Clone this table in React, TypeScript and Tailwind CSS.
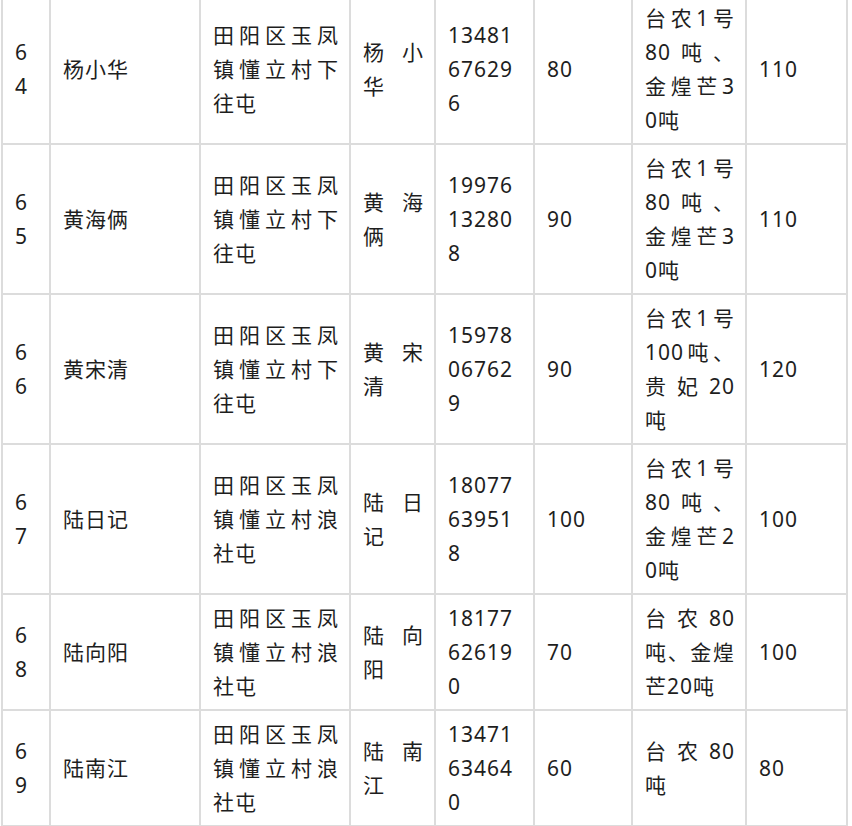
type Row = {
  no: string
  name: string
  addr: string
  contact: string
  phone: string
  area: string
  yield: string
  total: string
}

const rows: Row[] = [
  { no: '64', name: '杨小华', addr: '田阳区玉凤镇懂立村下往屯', contact: '杨小华', phone: '13481676296', area: '80', yield: '台农1号80吨、金煌芒30吨', total: '110' },
  { no: '65', name: '黄海俩', addr: '田阳区玉凤镇懂立村下往屯', contact: '黄海俩', phone: '19976132808', area: '90', yield: '台农1号80吨、金煌芒30吨', total: '110' },
  { no: '66', name: '黄宋清', addr: '田阳区玉凤镇懂立村下往屯', contact: '黄宋清', phone: '15978067629', area: '90', yield: '台农1号100吨、贵妃20吨', total: '120' },
  { no: '67', name: '陆日记', addr: '田阳区玉凤镇懂立村浪社屯', contact: '陆日记', phone: '18077639518', area: '100', yield: '台农1号80吨、金煌芒20吨', total: '100' },
  { no: '68', name: '陆向阳', addr: '田阳区玉凤镇懂立村浪社屯', contact: '陆向阳', phone: '18177626190', area: '70', yield: '台农80吨、金煌芒20吨', total: '100' },
  { no: '69', name: '陆南江', addr: '田阳区玉凤镇懂立村浪社屯', contact: '陆南江', phone: '13471634640', area: '60', yield: '台农80吨', total: '80' },
]

function Cell({ children }: { children: string }) {
  return (
    <div className="flex items-center border-r-2 border-b-2 border-[#dcdcdc] py-[6px] pr-[10px] pl-[12px]">
      <div className="w-full text-justify break-all">{children}</div>
    </div>
  )
}

export default function App() {
  return (
    <div className="h-[826px] w-[852px] overflow-hidden bg-white">
      <div
        className="-mt-[7px] ml-[1px] grid w-[847px] grid-cols-[48px_150px_150px_85px_99px_98px_114px_101px] border-t-2 border-l-2 border-[#dcdcdc] text-[21px] leading-[34px] tracking-[1px] text-[#1e1e1e]"
        style={{ fontFamily: '"Noto Sans", "Noto Sans CJK SC", sans-serif' }}
      >
        {rows.map((r) => (
          <div key={r.no} className="contents">
            <Cell>{r.no}</Cell>
            <Cell>{r.name}</Cell>
            <Cell>{r.addr}</Cell>
            <Cell>{r.contact}</Cell>
            <Cell>{r.phone}</Cell>
            <Cell>{r.area}</Cell>
            <Cell>{r.yield}</Cell>
            <Cell>{r.total}</Cell>
          </div>
        ))}
      </div>
    </div>
  )
}
